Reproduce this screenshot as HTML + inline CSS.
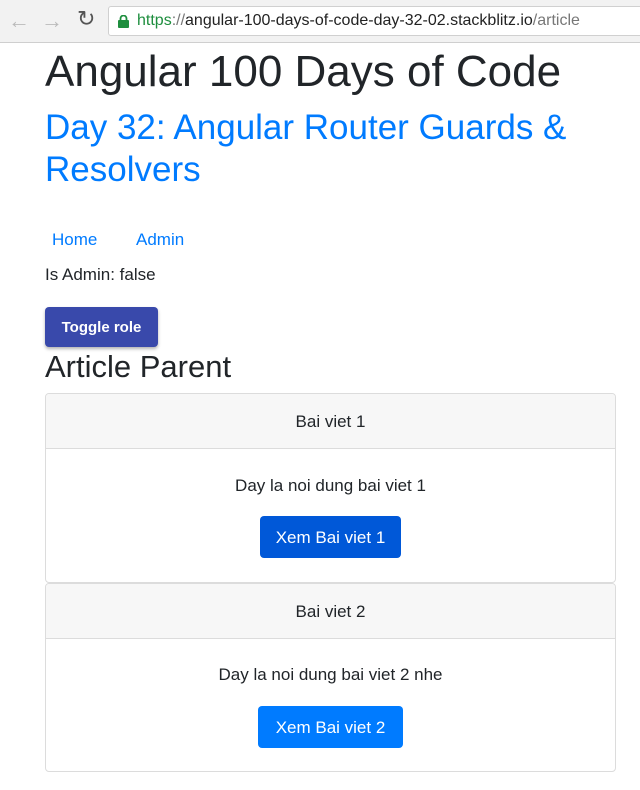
<!DOCTYPE html>
<html><head><style>
*{box-sizing:border-box;margin:0;padding:0}
body{width:640px;height:790px;overflow:hidden;background:#fff;font-family:"Liberation Sans",sans-serif;color:#212529;position:relative}
.bar{position:absolute;left:0;top:0;width:640px;height:43px;background:#f2f2f2;border-bottom:1px solid #cfcfcf}
.url{position:absolute;left:108px;top:6px;width:540px;height:30px;background:#fff;border:1px solid #d0d0d0;border-radius:3px;font-size:16px;line-height:28px;padding-left:28px;color:#222}
.a{position:absolute;white-space:nowrap}
.btn{position:absolute;color:#fff;border-radius:4px;text-align:center;font-size:17px}
.card{position:absolute;left:45px;width:571px;border:1px solid #dcdcdc;border-radius:4px;overflow:hidden}
.ch{height:55px;background:#f7f7f7;border-bottom:1px solid #dcdcdc;text-align:center;line-height:55px;font-size:17px}
.cb{position:relative;text-align:center;font-size:17px}
</style></head><body>
<div class="bar">
<span class="a" style="left:8px;top:8px;font-size:22px;color:#bbb">←</span>
<span class="a" style="left:41px;top:8px;font-size:22px;color:#bbb">→</span>
<span class="a" style="left:77px;top:6px;font-size:22px;color:#555">↻</span>
<div class="url"><svg style="position:absolute;left:9px;top:8px" width="11" height="13" viewBox="0 0 11 13"><rect x="0" y="5" width="11" height="8" rx="1" fill="#1e8e3e"/><path d="M2.5 5V3.5a3 3 0 0 1 6 0V5" stroke="#1e8e3e" stroke-width="1.8" fill="none"/></svg><span style="color:#1e8e3e">https</span><span style="color:#777">://</span>angular-100-days-of-code-day-32-02.stackblitz.io<span style="color:#777">/article</span></div>
</div>
<div class="a" style="left:45px;top:47px;font-size:44px;line-height:50px">Angular 100 Days of Code</div>
<div class="a" style="left:45px;top:107px;font-size:35px;line-height:42px;color:#007bff">Day 32: Angular Router Guards &amp;<br>Resolvers</div>
<div class="a" style="left:52px;top:230px;font-size:17px;color:#007bff">Home</div>
<div class="a" style="left:136px;top:230px;font-size:17px;color:#007bff">Admin</div>
<div class="a" style="left:45px;top:265px;font-size:17px">Is Admin: false</div>
<div class="btn" style="left:45px;top:307px;width:113px;height:40px;line-height:42px;background:#3949ab;font-size:15px;font-weight:bold;box-shadow:0 2px 3px rgba(0,0,0,.3)">Toggle role</div>
<div class="a" style="left:45px;top:349px;font-size:31px;line-height:36px">Article Parent</div>
<div class="card" style="top:393px;height:190px"><div class="ch">Bai viet 1</div>
<div class="cb"><div style="padding-top:27px">Day la noi dung bai viet 1</div>
<div class="btn" style="left:214px;top:67px;width:141px;height:42px;line-height:43px;background:#0058d8">Xem Bai viet 1</div></div></div>
<div class="card" style="top:583px;height:189px"><div class="ch">Bai viet 2</div>
<div class="cb"><div style="padding-top:26px">Day la noi dung bai viet 2 nhe</div>
<div class="btn" style="left:212px;top:67px;width:145px;height:42px;line-height:43px;background:#007bff">Xem Bai viet 2</div></div></div>
</body></html>
